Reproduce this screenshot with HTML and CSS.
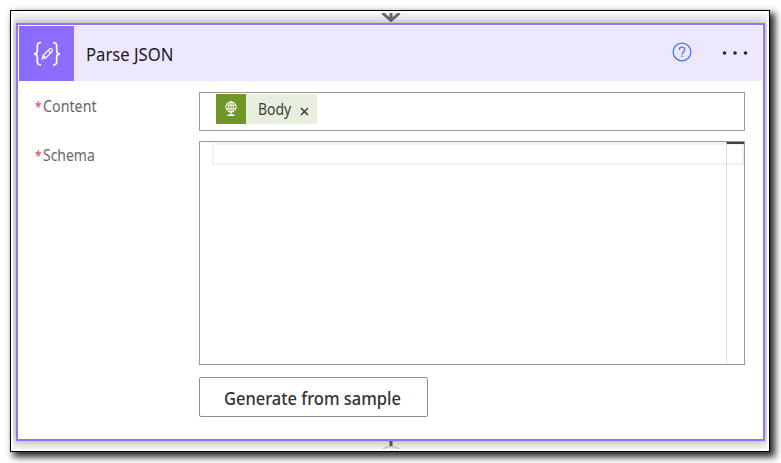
FILE: index.html
```html
<!DOCTYPE html>
<html lang="en">
<head>
<meta charset="utf-8">
<title>Parse JSON</title>
<link rel="stylesheet" href="styles.css">
</head>
<body>
<div class="frame">
  <div class="canvas">
    <svg class="arrow-top" width="22" height="11" viewBox="0 0 22 11"><path d="M2.500 0 11 7.500 19.500 0M11 0v8" fill="none" stroke="#666" stroke-width="3"/></svg>
    <section class="card">
      <header class="card-header">
        <div class="card-icon">
          <svg width="30" height="28" viewBox="0 0 30 28" fill="none" stroke="#fff" stroke-width="1.700">
            <path d="M9 2.500C6 2.500 5.300 3.500 5.300 6v4.500c0 2.200-1 3.400-3.300 3.400 2.300 0 3.300 1.200 3.300 3.400V21.500c0 2.500.7 3.500 3.700 3.500M21 2.500c3 0 3.700 1 3.700 3.500v4.500c0 2.200 1 3.400 3.300 3.400-2.300 0-3.300 1.200-3.300 3.400V21.500c0 2.500-.7 3.500-3.700 3.500"/>
            <path d="m10.200 19 1-3.700 6.400-6.300c1.600-1.300 3.800.9 2.500 2.500L13.700 18zM16.200 10.500l2.500 2.500M11.200 15.500 13.700 18" stroke-width="1.200"/>
          </svg>
        </div>
        <h1 class="title">Parse JSON</h1>
        <svg class="help" width="20" height="20" viewBox="0 0 20 20" fill="none" stroke="#3c7bff" stroke-width="1.300"><circle cx="10" cy="10" r="8.900"/><path d="M7.300 7.800c0-3.600 5.500-3.500 5.500-.2 0 2-2.700 2.300-2.700 4.900M10.100 13.600v1.500"/></svg>
        <svg class="more" width="26" height="6" viewBox="0 0 26 6" fill="#262626"><circle cx="2.500" cy="3" r="1.800"/><circle cx="13" cy="3" r="1.800"/><circle cx="23.500" cy="3" r="1.800"/></svg>
      </header>
      <div class="form">
        <div class="label"><span class="star">*</span><span class="content-label">Content</span></div>
        <div class="input">
          <div class="token">
            <span class="token-icon">
              <svg width="16" height="18" viewBox="0 0 16 18" fill="none" stroke="#fff" stroke-width="1"><circle cx="8" cy="7" r="5.200"/><ellipse cx="8" cy="7" rx="2.400" ry="5.200"/><path d="M3.300 5.200h9.400M3.300 8.800h9.400M8 1.800V15"/><path d="M4.500 15.200h7" stroke-width="1.600"/></svg>
            </span>
            <span class="token-text">Body</span>
            <svg class="close" width="9" height="9" viewBox="0 0 9 9"><path d="m1 1 7 7M8 1 1 8" stroke="#3c3c38" stroke-width="1.500"/></svg>
          </div>
        </div>
        <div class="label"><span class="star">*</span><span class="schema-label">Schema</span></div>
        <div class="editor">
          <div class="line"></div>
          <div class="ruler"></div>
        </div>
        <button class="generate" type="button"><span class="generate-text">Generate from sample</span></button>
      </div>
    </section>
    <svg class="arrow-bottom" width="18" height="8" viewBox="0 0 18 8"><path d="M1 8q8-5 16 0" fill="none" stroke="#c4c4c4" stroke-width="2"/><path d="M9 0v5" stroke="#555" stroke-width="3"/></svg>
  </div>
</div>
</body>
</html>
```
FILE: styles.css
```css
* { box-sizing: border-box; }
body {
  margin: 0;
  padding: 10px;
  width: 781px;
  height: 463px;
  overflow: hidden;
  background: #fff;
  font-family: "Noto Sans", "Open Sans", sans-serif;
}
svg { display: block; flex: none; }
.frame {
  width: 760px;
  height: 442px;
  border: 1px solid #000;
  padding: 2px;
  background: #fff;
  box-shadow: 4px 4px 7px 1px rgba(0, 0, 0, .85);
}
.canvas {
  position: relative;
  width: 754px;
  height: 436px;
  padding: 10px 3px;
  overflow: hidden;
  background: #f6f6f6;
}
.arrow-top { position: absolute; left: 367px; top: 0; z-index: 1; }
.arrow-bottom { position: absolute; left: 369px; top: 428px; }
.card {
  width: 749px;
  height: 418px;
  border: 2px solid #8f73ff;
  padding: 1px;
  background: #fff;
  box-shadow: 0 0 9px 1px rgba(0, 0, 0, .32);
}
.card-header {
  display: flex;
  align-items: center;
  height: 55px;
  background: #ede8ff;
}
.card-icon {
  display: grid;
  place-items: center;
  width: 55px;
  height: 55px;
  background: #8c6cff;
}
.title {
  width: 100px;
  margin: 0 0 0 12px;
  color: #1b1a1f;
  font-size: 18px;
  font-weight: 400;
  line-height: 24px;
  white-space: nowrap;
  transform: scaleX(.925);
  transform-origin: left;
}
.help { margin: -3px 0 0 auto; }
.more { margin: -1px 14px 0 30px; }
.form {
  display: grid;
  grid-template-columns: 164px 546px;
  grid-template-rows: 39px 224px 40px;
  row-gap: 10px;
  padding: 11px 0 0 16px;
}
.label {
  display: flex;
  padding-top: 4px;
  color: #666;
  font-size: 15.5px;
  line-height: 21px;
}
.star {
  width: 8px;
  color: #f23645;
  font-size: 14px;
  transform: scaleX(.85);
  transform-origin: left;
}
.content-label { transform: scaleX(.92); transform-origin: left; }
.schema-label { transform: scaleX(.9); transform-origin: left; }
.input {
  border: 1px solid #999;
  padding: 1px 16px;
}
.token {
  display: flex;
  align-items: center;
  width: 101px;
  height: 30px;
  background: #e9efdf;
}
.token-icon {
  display: grid;
  place-items: center;
  width: 30px;
  height: 30px;
  background: #6f9726;
}
.token-text {
  width: 34px;
  margin: 0 0 0 12px;
  color: #3c3c38;
  font-size: 15.5px;
  transform: scaleX(.9);
  transform-origin: left;
}
.close { margin: 4px 0 0 8px; }
.editor {
  display: grid;
  grid-template-columns: 1fr 18px;
  border: 1px solid #999;
  background: #fffffd;
}
.line {
  height: 22px;
  margin: 1px -18px 0 12px;
  border: 2px solid #f1f1f1;
}
.ruler {
  border-left: 1px solid #ddd;
  border-top: 2px solid #444;
}
.generate {
  display: flex;
  align-items: center;
  grid-column: 2;
  width: 229px;
  margin: 2px 0 -2px;
  padding: 1px 0 0 24px;
  border: 1px solid #8f8f8f;
  border-radius: 2px;
  background: #fff;
  color: #333;
  font: 500 18px/24px "Noto Sans", "Open Sans", sans-serif;
  white-space: nowrap;
}
.generate-text { transform: scaleX(.915); transform-origin: left; }
```
